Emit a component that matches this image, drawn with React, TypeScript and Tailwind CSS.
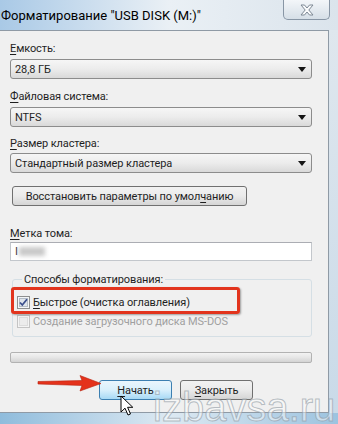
import React from 'react'

function U({ children }: { children: React.ReactNode }) {
  return <span className="underline underline-offset-2 decoration-1">{children}</span>
}

function Combo({ value }: { value: string }) {
  return (
    <div className="flex h-[20px] items-center justify-between rounded-[3px] border border-[#8c8c8c] bg-linear-to-b from-[#f6f6f6] via-[#ececec] to-[#d9d9d9] pl-[4px] pr-[5px]">
      <span className="leading-none">{value}</span>
      <svg width="8" height="5" viewBox="0 0 8 5">
        <path d="M0 0H8L4 5Z" fill="#151515" />
      </svg>
    </div>
  )
}

function Button({ children, hot, className }: { children: React.ReactNode; hot?: boolean; className?: string }) {
  return (
    <div
      className={
        'flex h-[20px] items-center justify-center whitespace-nowrap rounded-[3px] border ' +
        (hot
          ? 'border-[#3c7fb1] bg-linear-to-b from-[#eaf6fd] via-[#d9f0fc] to-[#a7d9f5] '
          : 'border-[#707070] bg-linear-to-b from-[#f2f2f2] via-[#ebebeb] to-[#d5d5d5] ') +
        (className ?? '')
      }
    >
      {children}
    </div>
  )
}

function CheckBox({ checked, disabled }: { checked?: boolean; disabled?: boolean }) {
  return (
    <svg width="13" height="13" viewBox="0 0 13 13" className="shrink-0">
      <rect x="0.5" y="0.5" width="12" height="12" fill={disabled ? '#f4f4f4' : '#f4f6f8'} stroke={disabled ? '#c4c4c4' : '#8e8f8f'} />
      <rect x="2.5" y="2.5" width="8" height="8" fill={disabled ? '#ececec' : '#dfe5ec'} stroke={disabled ? '#dcdcdc' : '#b4bcc6'} />
      {checked && <path d="M3 6.5L5.3 9L10 3.3" fill="none" stroke="#3b4f8c" strokeWidth="1.8" />}
    </svg>
  )
}

export default function App() {
  return (
    <div className="relative flex h-[424px] w-[338px] flex-col overflow-hidden bg-[#d9e4ee] font-['Roboto','Noto_Sans',sans-serif] text-[11px] tracking-[-0.1px] text-[#1f1f1f]">
      {/* title bar */}
      <div className="flex h-[30px] shrink-0 items-start justify-between bg-linear-to-r from-[#a9c9e6] via-[#eaf0f5] to-[#dbe4ec]">
        <div className="pt-[7px] pl-[1px] text-[13px] leading-[18px] tracking-normal text-black">Форматирование "USB DISK (M:)"</div>
        <div className="mr-[8px] flex h-[20px] w-[47px] items-center justify-center rounded-b-[5px] border border-t-0 border-[#8896a5] bg-linear-to-b from-[#f3f6f9] to-[#d6dfe7]">
          <svg width="14" height="12" viewBox="0 0 14 12">
            <path d="M1 1H4.5L7 4L9.5 1H13L8.8 6L13 11H9.5L7 8L4.5 11H1L5.2 6Z" fill="#fafbfc" stroke="#7d8894" strokeWidth="1" />
          </svg>
        </div>
      </div>

      <div className="flex flex-1">
        {/* client area */}
        <div className="flex w-[329px] flex-col border-t border-r border-b border-[#8f9aa5] bg-[#f0f0f0] pt-[10px] pl-[10px] pr-[16px] pb-[11px] leading-[15px]">
          <div>
            <U>Е</U>мкость:
          </div>
          <div className="mt-[3px]">
            <Combo value="28,8 ГБ" />
          </div>
          <div className="mt-[10px]">
            <U>Ф</U>айловая система:
          </div>
          <div className="mt-[3px]">
            <Combo value="NTFS" />
          </div>
          <div className="mt-[9px]">
            <U>Р</U>азмер кластера:
          </div>
          <div className="mt-[2px]">
            <Combo value="Стандартный размер кластера" />
          </div>
          <Button className="mt-[13px] ml-[2px] w-[235px]">
            <span>
              Восстановить параметры по умол<U>ч</U>анию
            </span>
          </Button>
          <div className="mt-[20px]">
            <U>М</U>етка тома:
          </div>
          <div className="mt-[1px] flex h-[19px] items-center border border-[#c3c7cc] border-t-[#abadb3] bg-white pl-[4px]">
            <span className="text-[#333]">I</span>
            <span className="ml-[1px] h-[9px] w-[26px] bg-[#c9c9c9] blur-[2px]" />
          </div>

          <div className="relative mt-[11px] ml-[2px] w-[300px]">
            <fieldset className="rounded-[3px] border border-[#d5dfe5] px-[4px] pb-[7px]">
              <legend className="ml-[5px] px-[2px]">Способы форматирования:</legend>
              <div className="mt-[7px] flex h-[16px] items-center gap-[3px]">
                <CheckBox checked />
                <span>
                  <U>Б</U>ыстрое (очистка оглавления)
                </span>
              </div>
              <div className="mt-[3px] flex h-[16px] items-center gap-[3px] text-[#a0a0a0]">
                <CheckBox disabled />
                <span>
                  Создание за<U>г</U>рузочного диска MS-DOS
                </span>
              </div>
            </fieldset>
            {/* annotation frame */}
            <div className="absolute top-[15px] left-[-1px] h-[27px] w-[229px] rounded-[3px] border-[3px] border-[#e2341d] shadow-[1px_1px_2px_rgba(0,0,0,0.35)]" />
          </div>

          <div className="mt-[15px] h-[11px] rounded-[2px] border border-[#b2b2b2] bg-linear-to-b from-[#f3f3f3] via-[#e6e6e6] to-[#d3d3d3]" />

          <div className="mt-[17px] ml-[89px] flex gap-[8px]">
            <Button hot className="w-[73px]">
              <span>
                <U>Н</U>ачать
              </span>
            </Button>
            <Button className="w-[73px]">
              <span>
                <U>З</U>акрыть
              </span>
            </Button>
          </div>
        </div>
        {/* right frame */}
        <div className="flex-1 bg-linear-to-b from-[#dfe7ee] to-[#c9dae8]" />
      </div>

      {/* bottom frame */}
      <div className="h-[11px] shrink-0 bg-linear-to-r from-[#8fbcdc] via-[#dde9f2] to-[#9cc3df]" />

      {/* red arrow */}
      <svg className="absolute top-[372px] left-[36px]" width="68" height="22" viewBox="0 0 68 22">
        <path d="M2 9.5L46 8.5L44 3.5L65 11.5L44 19L46 13.5L2 12Z" fill="#e4321b" stroke="#b8220f" strokeWidth="0.6" />
      </svg>

      {/* mouse cursor */}
      <svg className="absolute top-[395px] left-[120px]" width="15" height="22" viewBox="0 0 15 22">
        <path d="M1 1V17L5 13.2L8 20L10.5 19L7.6 12.3H12.8Z" fill="#fff" stroke="#000" strokeWidth="1" strokeLinejoin="round" />
      </svg>

      {/* watermark */}
      <div className="pointer-events-none absolute top-[387px] left-[153px] font-['Liberation_Sans',sans-serif] text-[40px] leading-[40px] tracking-normal text-white/45 [-webkit-text-stroke:1px_rgba(140,150,160,0.6)]">
        izbavsa.ru
      </div>
    </div>
  )
}
